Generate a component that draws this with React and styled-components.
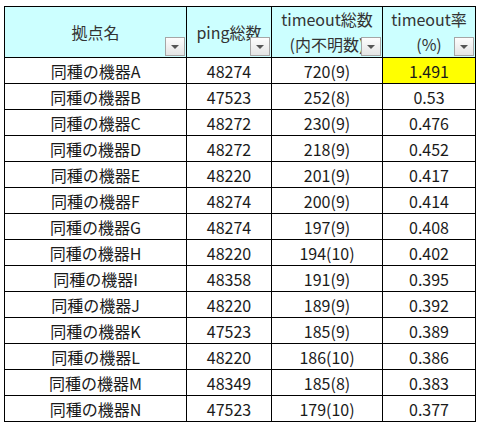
import React from "react";
import styled, { createGlobalStyle } from "styled-components";

const Global = createGlobalStyle`
  html, body { margin: 0; padding: 0; background: #fff; }
  body { font-family: "Noto Sans CJK JP", "Noto Sans", sans-serif; }
`;

const Sheet = styled.div`
  padding: 6px 0 0 4px;
`;

const Table = styled.table`
  border-collapse: collapse;
  table-layout: fixed;
  width: 471px;
  font-size: 16px;
  color: #1a1a1a;
`;

const HeadCell = styled.th`
  position: relative;
  height: 50px;
  padding: 0;
  background: #ccffff;
  border: 1px solid #000;
  font-weight: normal;
  color: #333;
  text-align: center;
  vertical-align: middle;
  line-height: 25px;
  overflow: hidden;
  white-space: nowrap;
`;

const Filter = styled.span`
  position: absolute;
  right: 1px;
  bottom: 1px;
  width: 20px;
  height: 19px;
  box-sizing: border-box;
  border: 1px solid #a6a6a6;
  background: linear-gradient(#fdfdfd, #e4e4e4);
  display: flex;
  align-items: center;
  justify-content: center;
  &::after {
    content: "";
    border-left: 4px solid transparent;
    border-right: 4px solid transparent;
    border-top: 4px solid #555;
    margin-top: 1px;
  }
`;

const Cell = styled.td`
  height: 25px;
  padding: 0;
  border: 1px solid #000;
  text-align: center;
  vertical-align: middle;
  background: ${(p) => (p.$hl ? "#ffff00" : "#fff")};
  white-space: nowrap;
`;

const rows = [
  ["A", 48274, "720(9)", "1.491"],
  ["B", 47523, "252(8)", "0.53"],
  ["C", 48272, "230(9)", "0.476"],
  ["D", 48272, "218(9)", "0.452"],
  ["E", 48220, "201(9)", "0.417"],
  ["F", 48274, "200(9)", "0.414"],
  ["G", 48274, "197(9)", "0.408"],
  ["H", 48220, "194(10)", "0.402"],
  ["I", 48358, "191(9)", "0.395"],
  ["J", 48220, "189(9)", "0.392"],
  ["K", 47523, "185(9)", "0.389"],
  ["L", 48220, "186(10)", "0.386"],
  ["M", 48349, "185(8)", "0.383"],
  ["N", 47523, "179(10)", "0.377"],
];

export default function App() {
  return (
    <>
      <Global />
      <Sheet>
        <Table>
          <colgroup>
            <col style={{ width: 182 }} />
            <col style={{ width: 85 }} />
            <col style={{ width: 111 }} />
            <col style={{ width: 93 }} />
          </colgroup>
          <thead>
            <tr>
              <HeadCell>拠点名<Filter /></HeadCell>
              <HeadCell>ping総数<Filter /></HeadCell>
              <HeadCell>timeout総数<br />(内不明数)<Filter /></HeadCell>
              <HeadCell>timeout率<br />(%)<Filter /></HeadCell>
            </tr>
          </thead>
          <tbody>
            {rows.map((r) => (
              <tr key={r[0]}>
                <Cell>同種の機器{r[0]}</Cell>
                <Cell>{r[1]}</Cell>
                <Cell>{r[2]}</Cell>
                <Cell $hl={r[0] === "A"}>{r[3]}</Cell>
              </tr>
            ))}
          </tbody>
        </Table>
      </Sheet>
    </>
  );
}
